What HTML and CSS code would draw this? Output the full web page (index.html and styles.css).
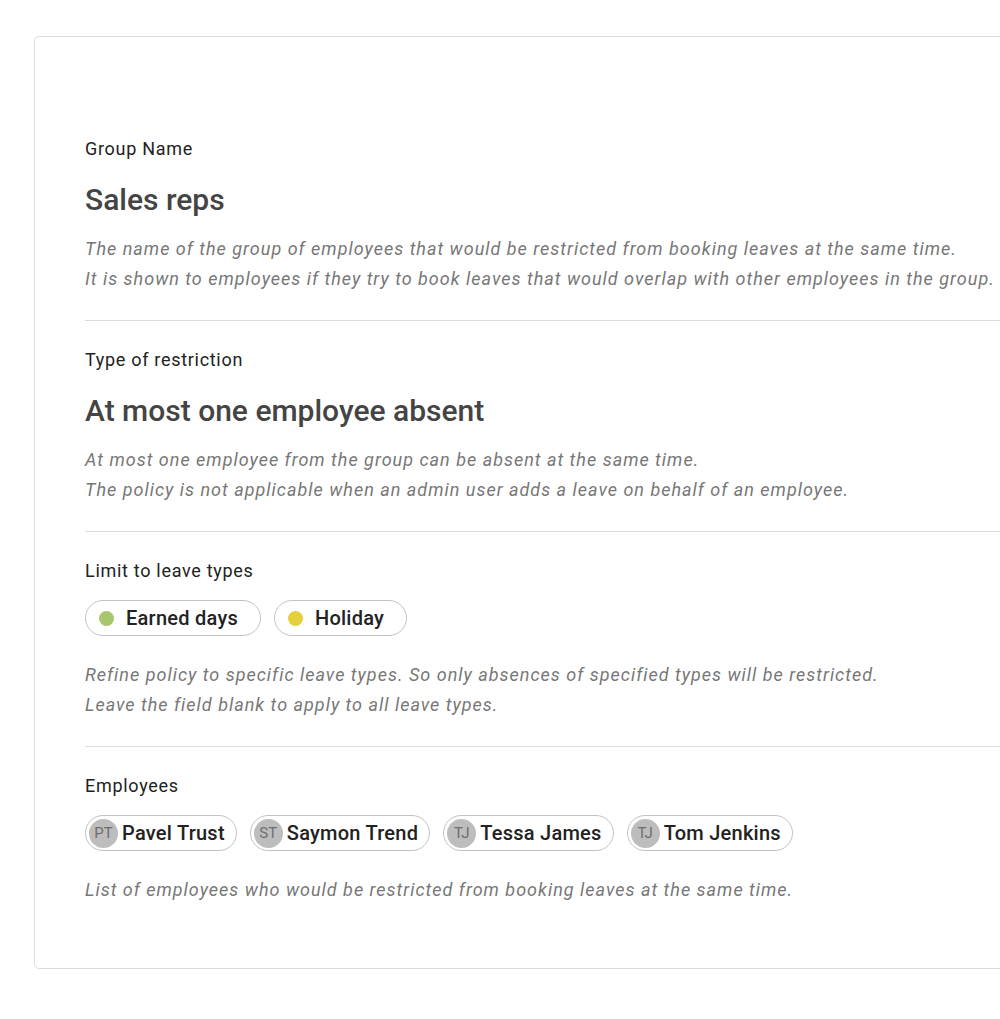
FILE: index.html
```html
<!DOCTYPE html>
<html>
<head>
<meta charset="utf-8">
<link rel="stylesheet" href="styles.css">
</head>
<body>
<div class="card">
  <section class="section">
    <div class="label">Group Name</div>
    <div class="value">Sales reps</div>
    <div class="desc">
      <p>The name of the group of employees that would be restricted from booking leaves at the same time.</p>
      <p>It is shown to employees if they try to book leaves that would overlap with other employees in the group.</p>
    </div>
  </section>
  <section class="section">
    <div class="label">Type of restriction</div>
    <div class="value">At most one employee absent</div>
    <div class="desc">
      <p>At most one employee from the group can be absent at the same time.</p>
      <p>The policy is not applicable when an admin user adds a leave on behalf of an employee.</p>
    </div>
  </section>
  <section class="section">
    <div class="label">Limit to leave types</div>
    <div class="chips">
      <span class="chip chip-type"><span class="dot dot-green"></span>Earned days</span>
      <span class="chip chip-type"><span class="dot dot-yellow"></span>Holiday</span>
    </div>
    <div class="desc desc-chips">
      <p>Refine policy to specific leave types. So only absences of specified types will be restricted.</p>
      <p>Leave the field blank to apply to all leave types.</p>
    </div>
  </section>
  <section class="section last">
    <div class="label">Employees</div>
    <div class="chips">
      <span class="chip chip-person"><span class="avatar">PT</span>Pavel Trust</span>
      <span class="chip chip-person"><span class="avatar">ST</span>Saymon Trend</span>
      <span class="chip chip-person"><span class="avatar">TJ</span>Tessa James</span>
      <span class="chip chip-person"><span class="avatar">TJ</span>Tom Jenkins</span>
    </div>
    <div class="desc desc-chips">
      <p>List of employees who would be restricted from booking leaves at the same time.</p>
    </div>
  </section>
</div>
</body>
</html>
```

FILE: styles.css
```css
html, body {
  margin: 0;
  padding: 0;
  overflow: hidden;
  background: #fff;
}
body {
  font-family: Roboto, "Noto Sans", Arial, sans-serif;
  padding: 36px 0 0 34px;
}
.card {
  width: 1040px;
  border: 1px solid #dcdcdc;
  border-radius: 5px;
  padding: 100px 0 63px 50px;
  box-sizing: border-box;
}
.section {
  border-bottom: 1px solid #dddddd;
  padding: 27px 0 26px;
}
.section:first-child {
  padding-top: 0;
}
.section.last {
  border-bottom: none;
  padding-bottom: 0;
}
.label {
  font-size: 18px;
  line-height: 24px;
  color: #222;
  letter-spacing: 0.7px;
}
.value {
  margin-top: 21px;
  font-size: 30px;
  line-height: 36px;
  font-weight: 500;
  color: #444;
}
.desc {
  margin-top: 16px;
  font-size: 18px;
  line-height: 30px;
  font-style: italic;
  color: #777;
  letter-spacing: 1px;
}
.desc p {
  margin: 0;
}
.desc-chips {
  margin-top: 24px;
}
.chips {
  margin-top: 17px;
  display: flex;
  gap: 13px;
}
.chip {
  display: inline-flex;
  align-items: center;
  height: 36px;
  box-sizing: border-box;
  border: 1.5px solid #c2c2c2;
  border-radius: 18px;
  font-size: 20px;
  font-weight: 500;
  letter-spacing: 0.25px;
  color: #222;
}
.chip-type {
  padding: 0 22px 0 13px;
}
.dot {
  width: 15px;
  height: 15px;
  border-radius: 50%;
  margin-right: 12px;
}
.dot-green { background: #a8c66c; }
.dot-yellow { background: #e6cf3c; }
.chip-person {
  padding: 0 11px 0 3px;
}
.avatar {
  width: 29px;
  height: 29px;
  border-radius: 50%;
  background: #bdbdbd;
  color: #6e6e6e;
  font-size: 15px;
  font-weight: 400;
  letter-spacing: 0;
  display: inline-flex;
  align-items: center;
  justify-content: center;
  margin-right: 4px;
}
```
